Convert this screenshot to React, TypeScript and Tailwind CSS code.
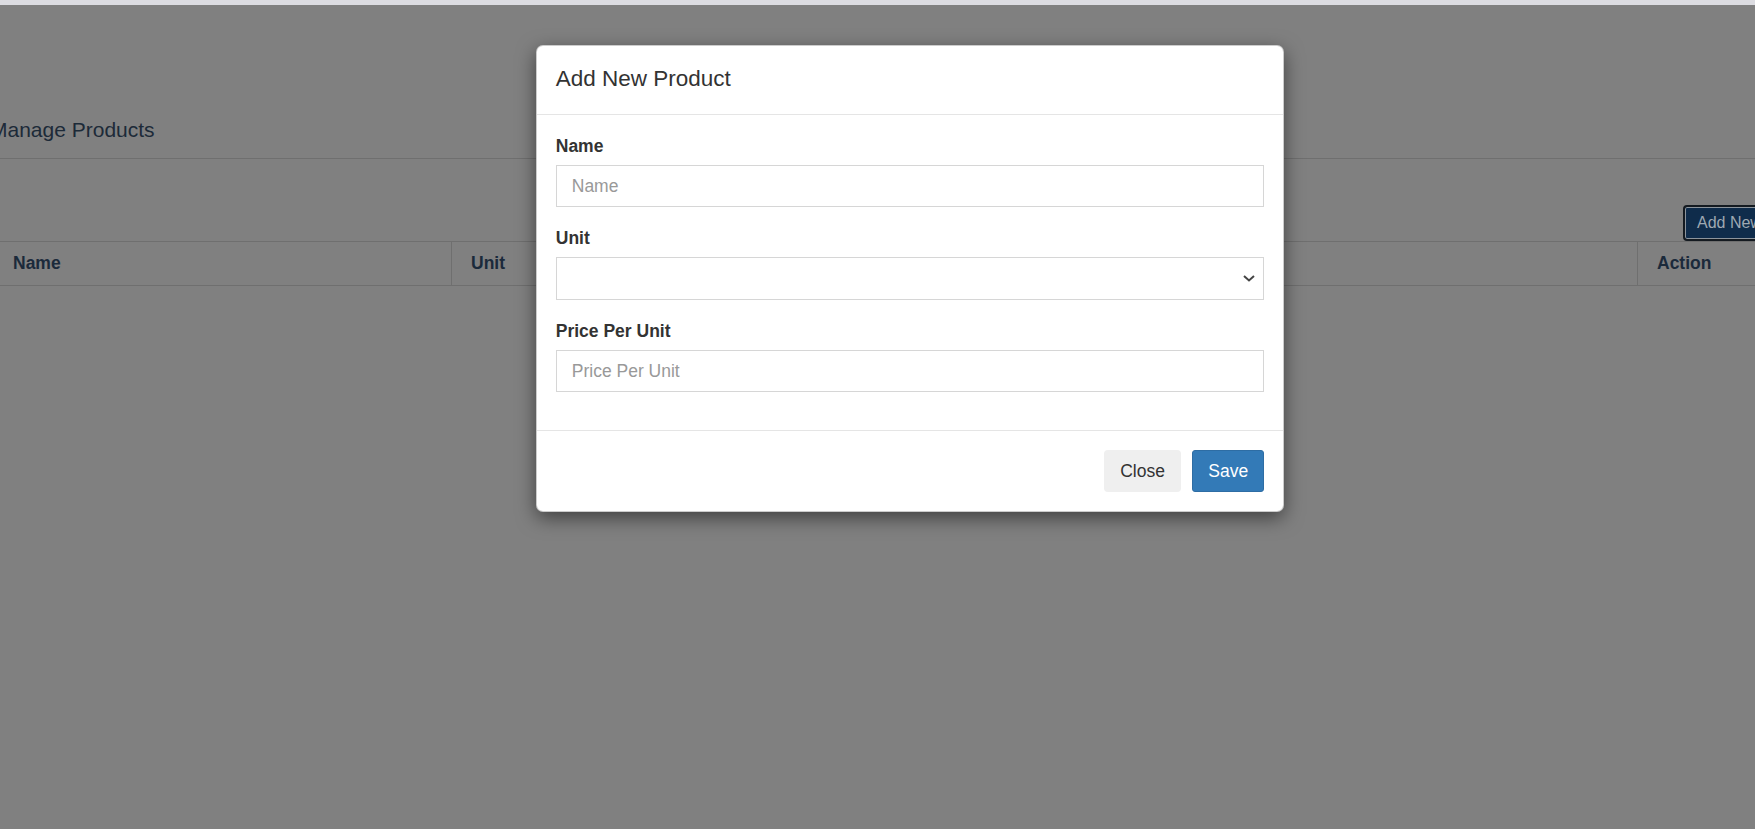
const fontStack = { fontFamily: '"Liberation Sans", Arial, sans-serif' };

function ProductsPage() {
  return (
    <div className="flex flex-col">
      <div className="h-[5px] bg-[#dcdce1]" />
      <div className="pt-[113px] pb-[16px] border-b border-[#6f6f6f]">
        <h2 className="-ml-[10px] text-[21px] leading-[24px] text-[#1c2a38]">Manage Products</h2>
      </div>
      <div className="flex mt-[46px] h-[36px]">
        <button className="ml-[1683px] shrink-0 h-[36px] px-[12px] rounded-[4px] border-2 border-[#141a20] bg-[#0f2c4b] text-[16px] text-[#9ea8b2] shadow-[inset_0_0_0_1px_#8c949c] whitespace-nowrap">
          Add New Product
        </button>
      </div>
      <div className="flex h-[45px] border-y border-[#6f6f6f] text-[17.5px] font-bold text-[#1b2a3b]">
        <div className="w-[451px] shrink-0 flex items-center pl-[13px]">Name</div>
        <div className="w-[400px] shrink-0 flex items-center pl-[19px] border-l border-[#6f6f6f]">Unit</div>
        <div className="w-[400px] shrink-0 flex items-center pl-[19px] border-l border-[#6f6f6f]">Price Per Unit</div>
        <div className="w-[386px] shrink-0 border-l border-[#6f6f6f]" />
        <div className="w-[200px] shrink-0 flex items-center pl-[19px] border-l border-[#6f6f6f]">Action</div>
      </div>
    </div>
  );
}

function Field({ label, placeholder }: { label: string; placeholder: string }) {
  return (
    <div className="mb-[18.75px]">
      <label className="block mb-[6.25px] text-[17.5px] leading-[25px] font-bold text-[#333]">{label}</label>
      <input
        className="block w-full h-[42.5px] px-[15px] border border-[#d6d6d6] text-[17.5px] text-[#555] placeholder:text-[#999] outline-none"
        placeholder={placeholder}
      />
    </div>
  );
}

function AddProductModal() {
  return (
    <div className="absolute left-[536px] top-[45px] w-[748px] bg-white rounded-[7px] border border-black/20 shadow-[0_6px_19px_rgba(0,0,0,0.5)]">
      <div className="px-[18.75px] pt-[17px] pb-[18.75px] border-b border-[#e5e5e5]">
        <h4 className="text-[22.5px] leading-[32px] text-[#333]">Add New Product</h4>
      </div>
      <div className="p-[18.75px]">
        <Field label="Name" placeholder="Name" />
        <div className="mb-[18.75px]">
          <label className="block mb-[6.25px] text-[17.5px] leading-[25px] font-bold text-[#333]">Unit</label>
          <div className="relative">
            <select className="block w-full h-[42.5px] px-[15px] border border-[#d6d6d6] bg-white appearance-none text-[17.5px] outline-none" />
            <svg
              className="absolute right-[9px] top-[18px] pointer-events-none"
              width="12"
              height="7"
              viewBox="0 0 12 7"
              fill="none"
            >
              <path d="M1 1l5 4.5L11 1" stroke="#444" strokeWidth="2" />
            </svg>
          </div>
        </div>
        <Field label="Price Per Unit" placeholder="Price Per Unit" />
      </div>
      <div className="px-[18.75px] pt-[19px] pb-[18.75px] border-t border-[#e5e5e5] flex justify-end gap-[11.5px]">
        <button className="h-[42.5px] w-[76.5px] rounded-[4px] bg-[#efefef] text-[17.5px] text-[#333]">Close</button>
        <button className="h-[42.5px] w-[72px] rounded-[3px] bg-[#337ab7] border border-[#2e6da4] text-[17.5px] text-white">Save</button>
      </div>
    </div>
  );
}

export default function App() {
  return (
    <div className="relative w-full h-[829px] overflow-hidden bg-[#808080]" style={fontStack}>
      <ProductsPage />
      <AddProductModal />
    </div>
  );
}
